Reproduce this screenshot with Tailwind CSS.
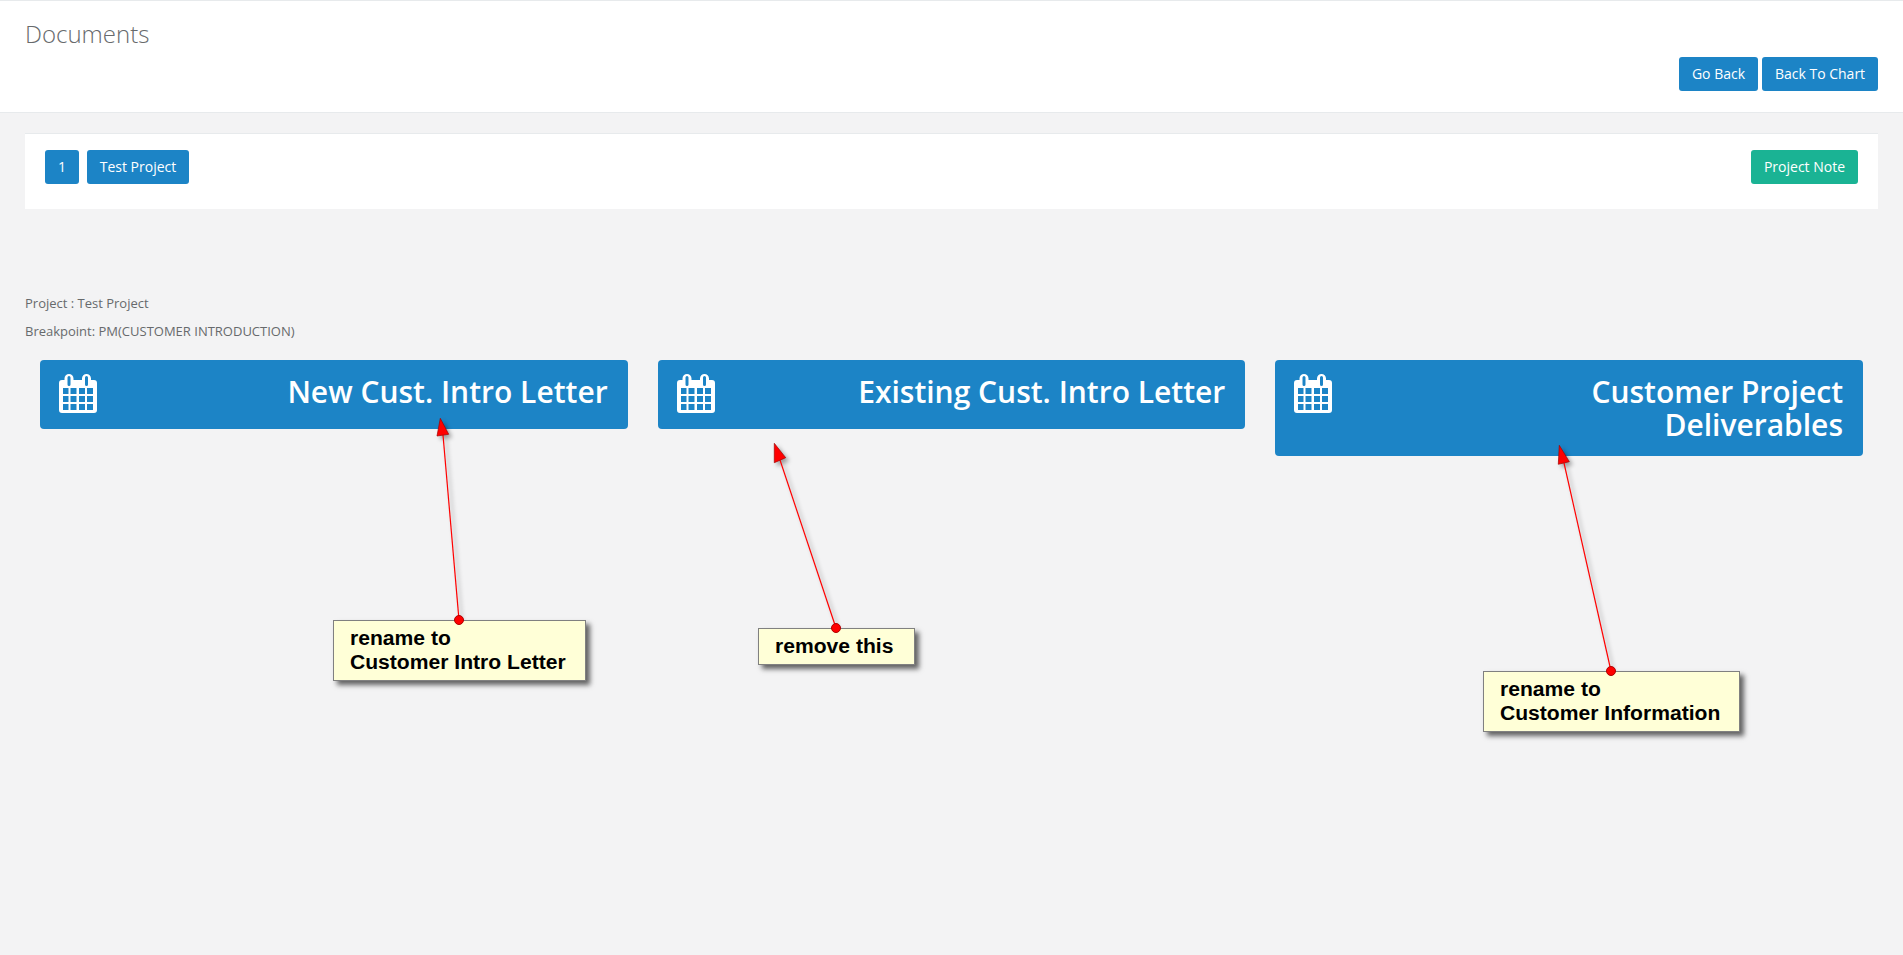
<!DOCTYPE html>
<html lang="en">
<head>
    <meta charset="UTF-8">
    <title>Documents</title>
    <script src="https://cdn.jsdelivr.net/npm/@tailwindcss/browser@4"></script>
</head>
<body class="relative h-[955px] overflow-hidden bg-[#f3f3f4] font-['Open_Sans',sans-serif] text-[13px] text-[#676a6c]">
    <svg class="hidden">
        <symbol id="calendar" viewBox="0 0 38 39">
            <path fill="#fff" fill-rule="evenodd" d="M10 0a4.5 4.5 0 0 1 4.5 4.5V6H23V4.5a4.5 4.5 0 0 1 9 0V6h3a3 3 0 0 1 3 3v27a3 3 0 0 1-3 3H3a3 3 0 0 1-3-3V9a3 3 0 0 1 3-3h2.5V4.5A4.5 4.5 0 0 1 10 0zM8.5 3.5v7a1.5 1.5 0 0 0 3 0v-7a1.5 1.5 0 0 0-3 0zM26 3.5v7a1.5 1.5 0 0 0 3 0v-7a1.5 1.5 0 0 0-3 0zM4 14v6h5.5v-6zM11.5 14v6h6v-6zM20 14v6h6v-6zM28 14v6h6v-6zM4 22v6h5.5v-6zM11.5 22v6h6v-6zM20 22v6h6v-6zM28 22v6h6v-6zM4 30v6h5.5v-6zM11.5 30v6h6v-6zM20 30v6h6v-6zM28 30v6h6v-6z"/>
        </symbol>
    </svg>

    <!-- page heading -->
    <div class="h-[113px] border-t border-b border-[#e7eaec] bg-white px-[25px] flex justify-between">
        <h2 class="mt-4 text-[24px] leading-[33px] font-light">Documents</h2>
        <div class="mt-[56px] flex gap-1 h-[34px] text-[14px]">
            <button class="h-[34px] w-[79px] rounded-[3px] bg-[#1c84c6] pb-px text-white">Go Back</button>
            <button class="h-[34px] w-[116px] rounded-[3px] bg-[#1c84c6] pb-px text-white">Back To Chart</button>
        </div>
    </div>

    <div class="px-[25px] pt-5">
        <div class="h-[76px] border-t border-[#e7eaec] bg-white px-5 pt-4 flex justify-between text-[14px]">
            <div class="flex gap-2">
                <button class="h-[34px] w-[34px] rounded-[3px] bg-[#1c84c6] pb-px text-white">1</button>
                <button class="h-[34px] w-[102px] rounded-[3px] bg-[#1c84c6] pb-px text-white">Test Project</button>
            </div>
            <button class="h-[34px] w-[107px] rounded-[3px] bg-[#1ab394] pb-px text-white">Project Note</button>
        </div>

        <p class="mt-[85px] leading-[19px]">Project : Test Project</p>
        <p class="mt-[9px] leading-[19px]">Breakpoint: PM(CUSTOMER INTRODUCTION)</p>

        <div class="mt-[19px] grid grid-cols-3 items-start">
            <div class="mx-[15px] flex justify-between rounded-[4px] bg-[#1c84c6] pl-[19px] pr-5 pt-[15px] pb-[21px] text-white">
                <svg class="-mt-px -mb-[5px] h-[39px] w-[38px] shrink-0"><use href="#calendar"/></svg>
                <h2 class="text-right text-[30px] leading-[33px] font-semibold">New Cust. Intro Letter</h2>
            </div>
            <div class="mx-[15px] flex justify-between rounded-[4px] bg-[#1c84c6] pl-[19px] pr-5 pt-[15px] pb-[21px] text-white">
                <svg class="-mt-px -mb-[5px] h-[39px] w-[38px] shrink-0"><use href="#calendar"/></svg>
                <h2 class="text-right text-[30px] leading-[33px] font-semibold">Existing Cust. Intro Letter</h2>
            </div>
            <div class="mx-[15px] flex justify-between rounded-[4px] bg-[#1c84c6] pl-[19px] pr-5 pt-[15px] pb-[15px] text-white">
                <svg class="-mt-px h-[39px] w-[38px] shrink-0"><use href="#calendar"/></svg>
                <h2 class="w-[400px] text-right text-[30px] leading-[33px] font-semibold">Customer Project Deliverables</h2>
            </div>
        </div>
    </div>

    <!-- annotations drawn over the screenshot -->
    <svg class="absolute left-0 top-0 drop-shadow-[3px_3px_2px_rgba(0,0,0,0.35)]" width="1903" height="955">
        <line x1="443" y1="435" x2="459" y2="620" stroke="#ff0000" stroke-width="1.2"/>
        <polygon points="440.3,418.3 437,436 448.7,434.3" fill="#ff0000" stroke="#a00000" stroke-width="0.7"/>
        <line x1="780" y1="460" x2="836" y2="628" stroke="#ff0000" stroke-width="1.2"/>
        <polygon points="774.3,443.3 774.3,462.7 785.7,457.7" fill="#ff0000" stroke="#a00000" stroke-width="0.7"/>
        <line x1="1564" y1="463" x2="1611" y2="671" stroke="#ff0000" stroke-width="1.2"/>
        <polygon points="1559.3,445.3 1558.3,464.3 1569.3,461.7" fill="#ff0000" stroke="#a00000" stroke-width="0.7"/>
    </svg>

    <div class="absolute left-[333px] top-[620px] h-[61px] w-[253px] border border-[#808080] bg-[#ffffd7] pl-4 pt-[5px] font-['Liberation_Sans',sans-serif] text-[21.1px] leading-6 font-bold text-black shadow-[4px_4px_5px_rgba(0,0,0,0.6)]">rename to<br>Customer Intro Letter</div>
    <div class="absolute left-[758px] top-[628px] h-[37px] w-[157px] border border-[#808080] bg-[#ffffd7] pl-4 pt-[5px] font-['Liberation_Sans',sans-serif] text-[21.1px] leading-6 font-bold text-black shadow-[4px_4px_5px_rgba(0,0,0,0.6)]">remove this</div>
    <div class="absolute left-[1483px] top-[671px] h-[61px] w-[257px] border border-[#808080] bg-[#ffffd7] pl-4 pt-[5px] font-['Liberation_Sans',sans-serif] text-[21.1px] leading-6 font-bold text-black shadow-[4px_4px_5px_rgba(0,0,0,0.6)]">rename to<br>Customer Information</div>

    <div class="absolute left-[454px] top-[615px] h-[10px] w-[10px] rounded-full border border-[#b00000] bg-[#ff0000]"></div>
    <div class="absolute left-[831px] top-[623px] h-[10px] w-[10px] rounded-full border border-[#b00000] bg-[#ff0000]"></div>
    <div class="absolute left-[1606px] top-[666px] h-[10px] w-[10px] rounded-full border border-[#b00000] bg-[#ff0000]"></div>
</body>
</html>
